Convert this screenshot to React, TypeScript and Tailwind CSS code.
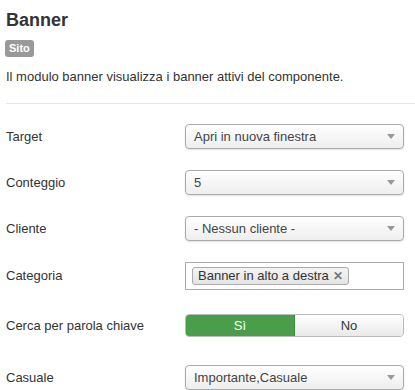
const Caret = () => (
  <svg width="8" height="5" viewBox="0 0 8 5" className="shrink-0">
    <path d="M0 0h8L4 5z" fill="#999" />
  </svg>
);

const Select = ({ value }: { value: string }) => (
  <div className="flex items-center justify-between w-[219px] h-[25px] px-[8px] border border-[#aaa] rounded-[4px] bg-gradient-to-b from-white to-[#eee] shadow-[0_1px_2px_rgba(0,0,0,0.12)] text-[13px] text-[#444]">
    <span>{value}</span>
    <Caret />
  </div>
);

const Row = ({ label, children }: { label: string; children: React.ReactNode }) => (
  <div className="flex items-center">
    <label className="w-[179px] text-[13px] text-[#333]">{label}</label>
    {children}
  </div>
);

const App = () => {
  return (
    <div className="w-[415px] h-[390px] overflow-hidden bg-white font-['Liberation_Sans',Arial,sans-serif] text-[#333]">
      <div className="pl-[6px] pt-[9px]">
        <h2 className="text-[18px] leading-[22px] font-bold text-[#333]">Banner</h2>
        <span className="inline-block mt-[9px] -ml-[1px] px-[4px] h-[17px] leading-[17px] rounded-[3px] bg-[#999] text-white text-[11px] font-bold">Sito</span>
        <p className="mt-[9px] text-[13px] leading-[18px] text-[#333]">Il modulo banner visualizza i banner attivi del componente.</p>
      </div>
      <hr className="ml-[6px] mt-[17px] border-t border-[#e5e5e5]" />
      <div className="pl-[6px] pt-[20px] flex flex-col gap-[21px]">
        <Row label="Target">
          <Select value="Apri in nuova finestra" />
        </Row>
        <Row label="Conteggio">
          <Select value="5" />
        </Row>
        <Row label="Cliente">
          <Select value="- Nessun cliente -" />
        </Row>
        <div className="flex flex-col">
          <Row label="Categoria">
            <div className="flex items-center w-[219px] h-[28px] px-[6px] border border-[#aaa] bg-white">
              <span className="flex items-center gap-[4px] h-[18px] px-[5px] border border-[#aaa] rounded-[3px] bg-gradient-to-b from-[#f4f4f4] to-[#e4e4e4] text-[13px] text-[#333]">
                Banner in alto a destra
                <span className="text-[12px] leading-none text-[#777] font-bold">✕</span>
              </span>
            </div>
          </Row>
          <div className="mt-[24px]">
            <Row label="Cerca per parola chiave">
              <div className="flex w-[219px] h-[23px] border border-[#bbb] rounded-[4px] overflow-hidden text-[13px]">
                <div className="flex-1 flex items-center justify-center bg-[#4a9e4a] text-white border-r border-[#3c8a3c]">Sì</div>
                <div className="flex-1 flex items-center justify-center bg-gradient-to-b from-white to-[#e9e9e9] text-[#333]">No</div>
              </div>
            </Row>
          </div>
          <div className="mt-[28px]">
            <Row label="Casuale">
              <Select value="Importante,Casuale" />
            </Row>
          </div>
        </div>
      </div>
    </div>
  );
};

export default App;
